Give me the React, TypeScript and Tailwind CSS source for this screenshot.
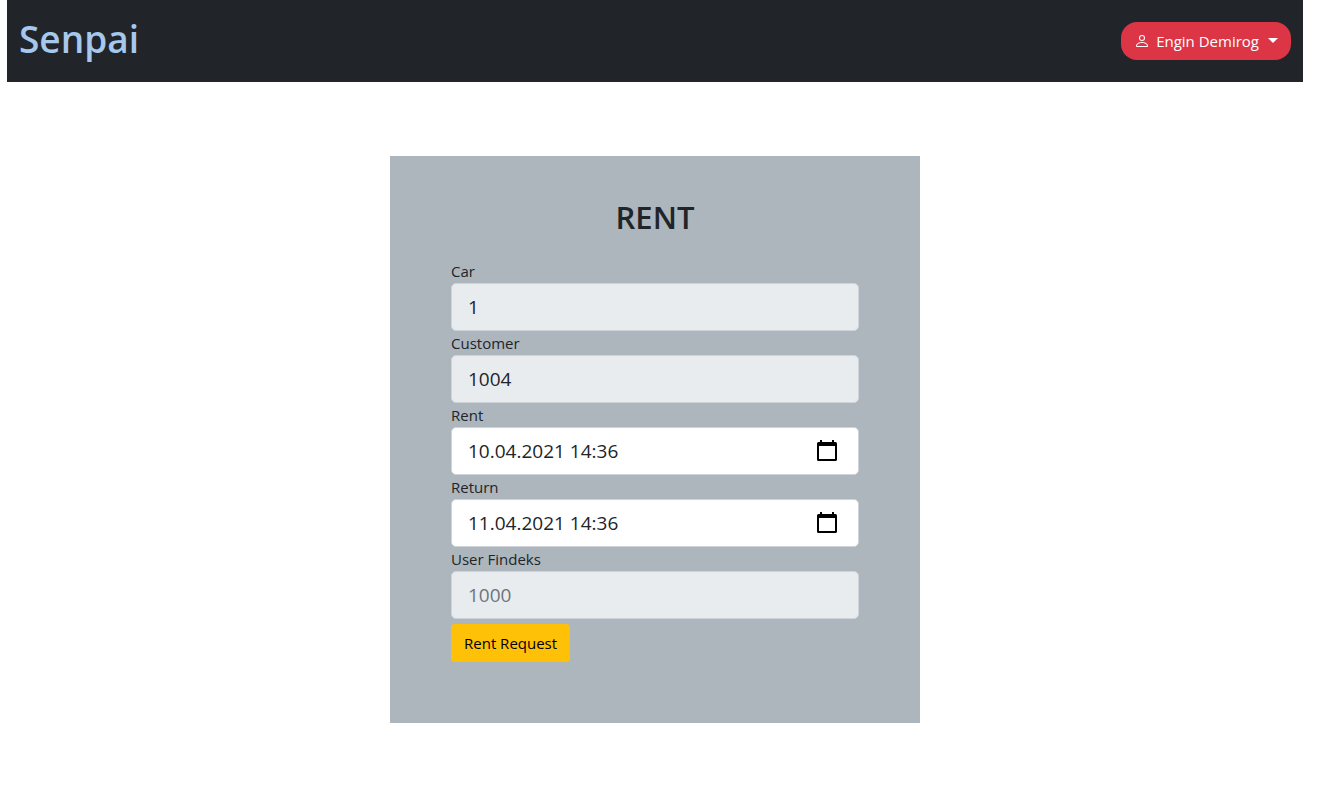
import React from "react";

type FieldProps = {
  id: string;
  label: string;
  value?: string;
  placeholder?: string;
  disabled?: boolean;
};

const boxClass =
  "flex h-12 items-center rounded-[5px] border border-[#ced4da] pl-4 pr-[21px] text-[19px]";

function Field({ id, label, value, placeholder, disabled }: FieldProps) {
  return (
    <div>
      <label htmlFor={id} className="block h-6 text-[15px] leading-6">
        {label}
      </label>
      <div className={`${boxClass} bg-[#e9ecef]`}>
        <input
          id={id}
          type="text"
          defaultValue={value}
          placeholder={placeholder}
          disabled={disabled}
          readOnly={!disabled}
          className="w-full min-w-0 bg-transparent outline-none placeholder:text-[#6c757d]"
        />
      </div>
    </div>
  );
}

function CalendarIcon() {
  return (
    <svg width="20" height="22" viewBox="0 0 20 22" aria-hidden="true">
      <path
        fill="#000"
        fillRule="evenodd"
        d="M3 0h2v2h10V0h2v2h1.500a1.500 1.500 0 0 1 1.500 1.500V19.500a1.500 1.500 0 0 1-1.500 1.500h-17A1.500 1.500 0 0 1 0 19.500V3.500A1.500 1.500 0 0 1 1.500 2H3V0zM2 6v13h16V6H2z"
      />
    </svg>
  );
}

function DateField({ id, label, value }: { id: string; label: string; value: string }) {
  return (
    <div>
      <label htmlFor={id} className="block h-6 text-[15px] leading-6">
        {label}
      </label>
      <div className={`${boxClass} bg-white`}>
        <input
          id={id}
          type="text"
          defaultValue={value}
          className="w-full min-w-0 flex-1 bg-transparent outline-none"
        />
        <button type="button" aria-label={`Choose ${label.toLowerCase()} date`}>
          <CalendarIcon />
        </button>
      </div>
    </div>
  );
}

export default function App() {
  return (
    <div className="min-h-screen bg-white pr-[25px] pl-[7px] font-['Open_Sans','Noto_Sans',sans-serif] text-[#212529]">
      <header className="flex h-[82px] items-center justify-between bg-[#212529] px-3">
        <a href="#" className="pb-1 text-[37px] leading-[48px] font-semibold text-[#a6c8ec]">
          Senpai
        </a>
        <button
          type="button"
          className="flex h-[38px] items-center rounded-2xl bg-[#dc3545] px-[13px] text-[15px] text-white"
        >
          <svg
            width="16"
            height="16"
            viewBox="0 0 16 16"
            fill="currentColor"
            className="mr-1.5"
            aria-hidden="true"
          >
            <path d="M8 8a3 3 0 1 0 0-6 3 3 0 0 0 0 6zm2-3a2 2 0 1 1-4 0 2 2 0 0 1 4 0zm4 8c0 1-1 1-1 1H3s-1 0-1-1 1-4 6-4 6 3 6 4zm-1-.004c-.001-.246-.154-.986-.832-1.664C11.516 10.680 10.289 10 8 10c-2.290 0-3.516.680-4.168 1.332-.678.678-.830 1.418-.832 1.664h10z" />
          </svg>
          Engin Demirog
          <svg width="10" height="5" viewBox="0 0 10 5" className="mb-0.5 ml-[9px]" aria-hidden="true">
            <path d="M0 0h10L5 5z" fill="currentColor" />
          </svg>
        </button>
      </header>

      <main className="flex justify-center pt-[74px]">
        <form
          className="w-full max-w-[530px] bg-[#adb5bd] px-[61px] pt-[41px] pb-[61px]"
          onSubmit={(e: React.FormEvent) => e.preventDefault()}
        >
          <h1 className="mb-[22px] text-center text-[31px] leading-10 font-semibold">RENT</h1>
          <Field id="car" label="Car" value="1" />
          <Field id="customer" label="Customer" value="1004" />
          <DateField id="rent" label="Rent" value="10.04.2021 14:36" />
          <DateField id="return" label="Return" value="11.04.2021 14:36" />
          <Field id="findeks" label="User Findeks" placeholder="1000" disabled />
          <button
            type="submit"
            className="mt-[5px] h-[38px] rounded bg-[#ffc107] px-[13px] text-[15px] text-black"
          >
            Rent Request
          </button>
        </form>
      </main>
    </div>
  );
}
